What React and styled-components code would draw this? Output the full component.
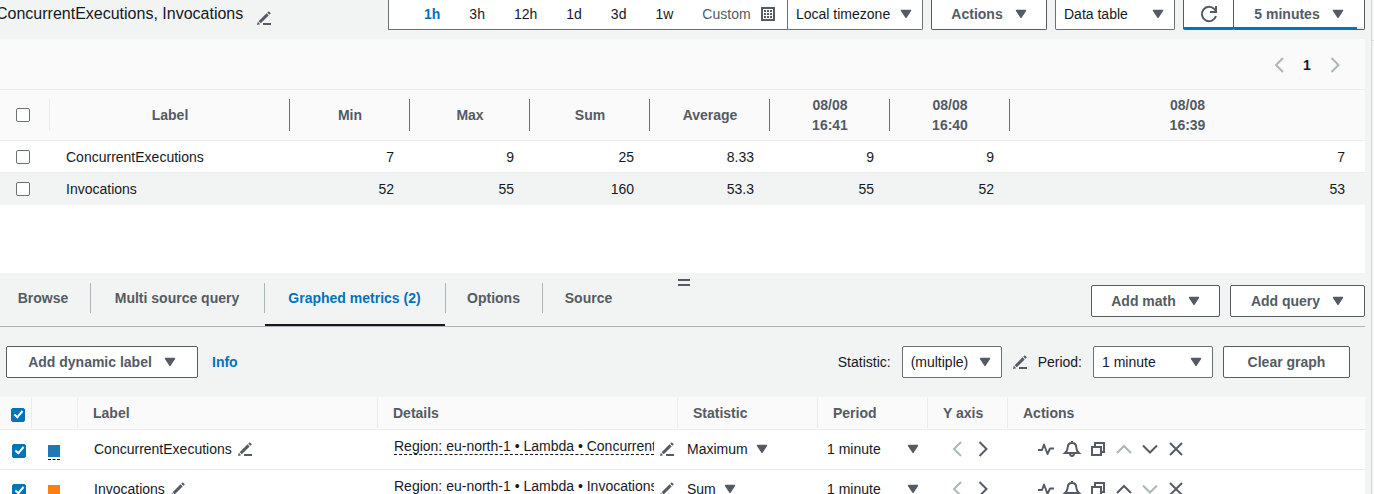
import React from "react";
import styled, { createGlobalStyle, css } from "styled-components";

const c = {
  text: "#16191f",
  muted: "#545b64",
  faint: "#aab7b8",
  border: "#687078",
  line: "#eaeded",
  link: "#0073bb",
  gray: "#f2f3f3",
  head: "#fafafa",
};

const Global = createGlobalStyle`
  *, *::before, *::after { box-sizing: border-box; }
  body {
    margin: 0;
    background: ${c.gray};
    color: ${c.text};
    font: 14px/20px "Liberation Sans", Arial, sans-serif;
  }
  button, select, input { font: inherit; color: inherit; margin: 0; }
  button { padding: 0; border: 0; background: none; cursor: pointer; }
`;

const Shell = styled.div`
  display: flex;
  height: 100vh;
  overflow: hidden;
`;

const Main = styled.main`
  flex: 1;
  min-width: 0;
  padding-right: 6px;
  border-right: 1px solid #d5dbdb;
`;

const SideRail = styled.aside`
  flex: 0 0 2px;
  padding-top: 40px;
  &::before {
    content: "";
    display: block;
    border-top: 1px solid #d5dbdb;
  }
`;

/* ---------- icons ---------- */

const Svg = styled.svg`
  display: block;
  flex: none;
  overflow: visible;
  fill: none;
  stroke: currentColor;
  stroke-width: 2;
`;

const Caret = () => (
  <Svg width="12" height="10" viewBox="0 0 12 10" aria-hidden="true">
    <path d="M1.5 1.5h9L6 8.4z" fill="currentColor" stroke="currentColor" strokeWidth="1.4" strokeLinejoin="round" />
  </Svg>
);

const Pencil = () => (
  <Svg width="14" height="14" viewBox="0 0 14 14" aria-hidden="true">
    <path d="M2.700 11.300L10.600 3.400" strokeWidth="3" />
    <path d="M11.300 2.700L12.800 1.200" strokeWidth="3" strokeLinejoin="round" />
    <path d="M0 14l.8-3.200 2.400 2.400z" fill="currentColor" stroke="none" />
    <path d="M6 13h8" />
  </Svg>
);

const Chevron = ({ dir }) => {
  const d = {
    left: "M12 1L5 8l7 7",
    right: "M4.500 1l7 7-7 7",
    up: "M1 12l7-7 7 7",
    down: "M1 4.500l7 7 7-7",
  }[dir];
  return (
    <Svg width="16" height="16" viewBox="0 0 16 16" aria-hidden="true">
      <path d={d} />
    </Svg>
  );
};

const Refresh = () => (
  <Svg width="16" height="16" viewBox="0 0 16 16" aria-hidden="true">
    <path d="M15 10A7.200 7.200 0 1 1 13.500 3.200L15 5" />
    <path d="M15 0v6H9" />
  </Svg>
);

const Calendar = () => (
  <Svg width="14" height="14" viewBox="0 0 14 14" aria-hidden="true">
    <path d="M1 1h12v12H1z" />
    <path d="M3 4h8M3 7h8M3 10h8" strokeDasharray="2 1" />
  </Svg>
);

const Pulse = () => (
  <Svg width="16" height="16" viewBox="0 0 16 16" aria-hidden="true">
    <path d="M0 9h4l2-5.500 3.500 9.500L12 7.500h4" strokeWidth="1.900" strokeLinejoin="round" />
  </Svg>
);

const Bell = () => (
  <Svg width="16" height="16" viewBox="0 0 16 16" aria-hidden="true">
    <path d="M8 0v2M1 12h14c-1.700-1.500-2.700-3-2.700-5.500S10.700 2 8 2 3.700 4 3.700 6.500 2.700 10.500 1 12z" />
    <path d="M6 12.500c0 3.300 4 3.300 4 0" />
  </Svg>
);

const Copy = () => (
  <Svg width="16" height="16" viewBox="0 0 16 16" aria-hidden="true">
    <path d="M2 6h9v8H2zM5 5V2h9v9h-2" />
  </Svg>
);

const Close = () => (
  <Svg width="16" height="16" viewBox="0 0 16 16" aria-hidden="true">
    <path d="M2 2l12 12M14 2L2 14" />
  </Svg>
);

/* ---------- controls ---------- */

const controlBox = css`
  height: 32px;
  background: #fff;
  border: 1px solid ${c.muted};
  border-radius: 2px;
  ${(p) =>
    p.$docked &&
    css`
      height: 30px;
      padding-bottom: 2px;
      border-top: 0;
      border-radius: 0 0 2px 2px;
    `}
`;

const Button = styled.button`
  ${controlBox}
  flex: none;
  display: flex;
  align-items: center;
  justify-content: center;
  gap: 12px;
  width: ${(p) => p.$w}px;
  color: ${c.muted};
  font-weight: 700;
`;

const SelectBox = styled.div`
  ${controlBox}
  flex: none;
  display: grid;
  align-items: center;
  width: ${(p) => p.$w}px;
  color: ${c.muted};
  border-color: ${c.border};
  ${(p) =>
    p.$plain &&
    css`
      height: 20px;
      border: 0;
      background: none;
      width: ${p.$w ? `${p.$w}px` : "max-content"};
    `}
  > * {
    grid-area: 1 / 1;
  }
  > svg {
    justify-self: end;
    margin-right: ${(p) => (p.$plain ? 0 : 10)}px;
    pointer-events: none;
  }
`;

const NativeSelect = styled.select`
  appearance: none;
  field-sizing: content;
  min-width: 100%;
  height: 100%;
  padding: 0 ${(p) => (p.$plain ? 20 : 22)}px 0 ${(p) => (p.$plain ? 0 : 8)}px;
  border: 0;
  background: none;
  color: ${c.text};
`;

const Select = ({ label, id, value, options = [], w, docked, plain }) => (
  <SelectBox $w={w} $docked={docked} $plain={plain}>
    <NativeSelect id={id} aria-label={label} defaultValue={value} $plain={plain}>
      {[value, ...options].map((o) => (
        <option key={o}>{o}</option>
      ))}
    </NativeSelect>
    <Caret />
  </SelectBox>
);

const Checkbox = styled.input.attrs({ type: "checkbox" })`
  appearance: none;
  display: block;
  width: 14px;
  height: 14px;
  border: 1px solid ${c.border};
  border-radius: 2px;
  background: #fff;
  &:checked {
    border-color: ${c.link};
    background: ${c.link};
  }
  &:checked::before {
    content: "";
    display: block;
    width: 5px;
    height: 9px;
    margin: 0 0 0 4px;
    border: solid #fff;
    border-width: 0 2px 2px 0;
    transform: rotate(40deg);
  }
`;

const IconButton = styled.button`
  display: flex;
  flex: none;
  color: ${(p) => (p.disabled ? c.faint : c.muted)};
`;

/* ---------- header ---------- */

const Header = styled.header`
  display: flex;
  align-items: flex-start;
  height: 39px;
`;

const TitleGroup = styled.div`
  display: flex;
  align-items: center;
  gap: 14px;
  flex: 1;
  min-width: 0;
  height: 28px;
  margin-left: -4px;
  svg {
    margin-top: 8px;
  }
`;

const Title = styled.h1`
  margin: 0;
  font-size: 16px;
  font-weight: 400;
  white-space: nowrap;
`;

const RangeBar = styled.div`
  display: flex;
  align-items: center;
  gap: 29px;
  flex: none;
  width: 400px;
  height: 30px;
  padding: 0 0 2px 35px;
  margin-right: -1px;
  border: 1px solid ${c.border};
  border-top: 0;
  background: #fff;
`;

const RangeButton = styled.button`
  display: flex;
  align-items: center;
  gap: 10px;
  color: ${(p) => (p.$active ? c.link : p.$soft ? c.muted : c.text)};
  font-weight: ${(p) => (p.$active ? 700 : 400)};
`;

const HeaderControls = styled.div`
  display: flex;
  gap: 8px;
`;

const RefreshGroup = styled.div`
  position: relative;
  display: flex;
  > button + button {
    margin-left: -1px;
  }
`;

const Progress = styled.div`
  position: absolute;
  left: 0;
  right: 1px;
  bottom: 1px;
  height: 2px;
  background: ${c.line};
  &::before {
    content: "";
    display: block;
    width: 96%;
    height: 2px;
    background: ${c.link};
  }
`;

/* ---------- data table ---------- */

const DataPanel = styled.section`
  min-height: 234px;
  background: #fff;
`;

const Pager = styled.nav`
  display: flex;
  align-items: center;
  justify-content: flex-end;
  gap: 16px;
  height: 51px;
  padding: 2px 22px 0 0;
  background: ${c.head};
  border-bottom: 1px solid ${c.line};
`;

const PageNumber = styled.button`
  width: 8px;
  font-weight: 700;
`;

const Table = styled.table`
  width: 100%;
  table-layout: fixed;
  border-collapse: separate;
  border-spacing: 0;
`;

const Col = styled.col`
  width: ${(p) => (p.$w ? `${p.$w}px` : "auto")};
`;

const Th = styled.th`
  position: relative;
  height: ${(p) => p.$h}px;
  padding: 0 16px;
  background: ${c.head};
  border-bottom: 1px solid ${c.line};
  color: ${c.muted};
  text-align: ${(p) => p.$align || "left"};
  &:not(:last-child)::after {
    content: "";
    position: absolute;
    right: 0;
    top: ${(p) => p.$inset}px;
    bottom: ${(p) => p.$inset}px;
    border-right: 1px solid ${(p) => (p.$strong ? c.border : c.line)};
  }
`;

const MetricTh = styled(Th)`
  padding: 0 15px;
`;

const SelectHead = styled(Th)`
  padding: 3px 0 0 11px;
`;

const DataRow = styled.tr`
  background: ${(p) => (p.$shaded ? c.gray : "#fff")};
`;

const DataCell = styled.td`
  height: 32px;
  padding: 0 16px;
  border-bottom: 1px solid ${c.line};
  text-align: ${(p) => p.$align || "right"};
  &:last-child {
    padding-right: 20px;
  }
  tr:last-child > & {
    border-bottom-color: ${c.gray};
  }
`;

/* ---------- lower panel ---------- */

const Lower = styled.section`
  position: relative;
`;

const Handle = styled.div`
  position: absolute;
  top: 6px;
  left: 50%;
  width: 12px;
  height: 7px;
  margin-left: -5px;
  border: solid ${c.muted};
  border-width: 2px 0;
`;

const TabBar = styled.div`
  display: flex;
  justify-content: space-between;
  align-items: flex-end;
  height: 54px;
  border-bottom: 1px solid ${c.faint};
`;

const Tabs = styled.div`
  display: flex;
  margin-left: -3px;
`;

const Tab = styled.button`
  display: flex;
  justify-content: center;
  align-items: flex-start;
  width: ${(p) => p.$w}px;
  height: 43px;
  padding-right: 1px;
  border-bottom: 2px solid ${(p) => (p.$active ? c.text : "transparent")};
  color: ${(p) => (p.$active ? c.link : c.muted)};
  font-weight: 700;
  line-height: 30px;
`;

const TabDivider = styled.span`
  width: 1px;
  height: 30px;
  background: ${c.faint};
`;

const ButtonRow = styled.div`
  display: flex;
  gap: 10px;
  padding-bottom: 9px;
`;

const Toolbar = styled.div`
  display: flex;
  align-items: center;
  justify-content: space-between;
  height: 70px;
  padding: 0 15px 0 6px;
`;

const ToolGroup = styled.div`
  display: flex;
  align-items: center;
  gap: ${(p) => p.$gap || 10}px;
`;

const InfoLink = styled.a`
  margin-left: 4px;
  color: ${c.link};
  font-weight: 700;
  text-decoration: none;
`;

const MetricRow = styled.tr`
  background: #fff;
`;

const MetricCell = styled.td`
  height: 40px;
  padding: 0 0 2px ${(p) => p.$pad}px;
  border-bottom: 1px solid ${c.line};
`;

const MarkCell = styled(MetricCell)`
  padding-top: 2px;
  padding-bottom: 0;
`;

const Inline = styled.div`
  display: flex;
  align-items: center;
  gap: ${(p) => p.$gap || 6}px;
`;

const Swatch = styled.button`
  display: block;
  width: 12px;
  height: 15px;
  margin-top: 3px;
  border-bottom: 1px dashed ${c.text};
  &::before {
    content: "";
    display: block;
    height: 12px;
    margin-bottom: 2px;
    background: ${(p) => p.$color};
  }
`;

const Details = styled.span`
  width: 260px;
  margin-bottom: 5px;
  overflow: hidden;
  border-bottom: 1px dashed ${c.text};
  line-height: 16px;
  white-space: nowrap;
`;

const ranges = ["1h", "3h", "12h", "1d", "3d", "1w"];
const heads = ["Min", "Max", "Sum", "Average", "08/08 16:41", "08/08 16:40", "08/08 16:39"];
const rows = [
  { label: "ConcurrentExecutions", values: ["7", "9", "25", "8.33", "9", "9", "7"] },
  { label: "Invocations", values: ["52", "55", "160", "53.3", "55", "52", "53"] },
];
const tabs = [
  { name: "Browse", w: 93 },
  { name: "Multi source query", w: 173 },
  { name: "Graphed metrics (2)", w: 180, active: true },
  { name: "Options", w: 96 },
  { name: "Source", w: 92 },
];
const metrics = [
  { label: "ConcurrentExecutions", stat: "Maximum", other: "Sum", color: "#1f77b4", first: true },
  { label: "Invocations", stat: "Sum", other: "Maximum", color: "#ff7f0e", first: false },
];

const HeadText = ({ text }) =>
  text.split(" ").map((part, i) => (
    <React.Fragment key={part}>
      {i > 0 && <br />}
      {part}
    </React.Fragment>
  ));

export default function App() {
  return (
    <>
      <Global />
      <Shell>
        <Main>
          <Header>
            <TitleGroup>
              <Title>ConcurrentExecutions, Invocations</Title>
              <IconButton aria-label="Edit title"><Pencil /></IconButton>
            </TitleGroup>
            <RangeBar>
              {ranges.map((r) => (
                <RangeButton key={r} $active={r === "1h"}>{r}</RangeButton>
              ))}
              <RangeButton $soft>Custom <Calendar /></RangeButton>
            </RangeBar>
            <HeaderControls>
              <Select docked w={136} label="Timezone" value="Local timezone" options={["UTC"]} />
              <Button $docked $w={116}>Actions <Caret /></Button>
              <Select docked w={120} label="Graph type" value="Data table" options={["Line"]} />
              <RefreshGroup>
                <Button $docked $w={51} aria-label="Refresh"><Refresh /></Button>
                <Button $docked $w={132}>5 minutes <Caret /></Button>
                <Progress />
              </RefreshGroup>
            </HeaderControls>
          </Header>

          <DataPanel>
            <Pager aria-label="Pages">
              <IconButton disabled aria-label="Previous page"><Chevron dir="left" /></IconButton>
              <PageNumber>1</PageNumber>
              <IconButton disabled aria-label="Next page"><Chevron dir="right" /></IconButton>
            </Pager>
            <Table>
              <colgroup>
                <Col $w={50} />
                <Col $w={240} />
                {heads.slice(1).map((h) => <Col key={h} $w={120} />)}
                <Col />
              </colgroup>
              <thead>
                <tr>
                  <Th $h={51} $inset={9}><Checkbox aria-label="Select all rows" /></Th>
                  <Th $h={51} $inset={9} $align="center" $strong>Label</Th>
                  {heads.map((h) => (
                    <Th key={h} $h={51} $inset={9} $align="center" $strong><HeadText text={h} /></Th>
                  ))}
                </tr>
              </thead>
              <tbody>
                {rows.map((r, i) => (
                  <DataRow key={r.label} $shaded={i === 1}>
                    <DataCell><Checkbox aria-label={`Select ${r.label}`} /></DataCell>
                    <DataCell $align="left">{r.label}</DataCell>
                    {r.values.map((v, j) => (
                      <DataCell key={heads[j]}>{v}</DataCell>
                    ))}
                  </DataRow>
                ))}
              </tbody>
            </Table>
          </DataPanel>

          <Lower>
            <Handle role="separator" aria-label="Resize panels" />
            <TabBar>
              <Tabs role="tablist">
                {tabs.map((t, i) => (
                  <React.Fragment key={t.name}>
                    {i > 0 && <TabDivider />}
                    <Tab role="tab" aria-selected={!!t.active} $active={t.active} $w={t.w}>{t.name}</Tab>
                  </React.Fragment>
                ))}
              </Tabs>
              <ButtonRow>
                <Button $w={129}>Add math <Caret /></Button>
                <Button $w={135}>Add query <Caret /></Button>
              </ButtonRow>
            </TabBar>
            <Toolbar>
              <ToolGroup>
                <Button $w={192}>Add dynamic label <Caret /></Button>
                <InfoLink href="#info">Info</InfoLink>
              </ToolGroup>
              <ToolGroup>
                <ToolGroup $gap={11}>
                  <label htmlFor="statistic">Statistic:</label>
                  <Select id="statistic" w={100} value="(multiple)" />
                  <IconButton aria-label="Edit statistic"><Pencil /></IconButton>
                  <label htmlFor="period">Period:</label>
                  <Select id="period" w={120} value="1 minute" options={["5 minutes"]} />
                </ToolGroup>
                <Button $w={127}>Clear graph</Button>
              </ToolGroup>
            </Toolbar>
            <Table>
              <colgroup>
                {[32, 46, 300, 300, 140, 110, 80].map((w, i) => <Col key={i} $w={w} />)}
                <Col />
              </colgroup>
              <thead>
                <tr>
                  <SelectHead $h={33} $inset={1}>
                    <Checkbox defaultChecked aria-label="Show all metrics" />
                  </SelectHead>
                  {["", "Label", "Details", "Statistic", "Period", "Y axis", "Actions"].map((h) => (
                    <MetricTh key={h} $h={33} $inset={1}>{h}</MetricTh>
                  ))}
                </tr>
              </thead>
              <tbody>
                {metrics.map((m) => (
                  <MetricRow key={m.label}>
                    <MarkCell $pad={12}><Checkbox defaultChecked aria-label={`Show ${m.label}`} /></MarkCell>
                    <MarkCell $pad={16}><Swatch $color={m.color} aria-label={`Color of ${m.label}`} /></MarkCell>
                    <MetricCell $pad={16}>
                      <Inline>{m.label}<IconButton aria-label="Edit label"><Pencil /></IconButton></Inline>
                    </MetricCell>
                    <MetricCell $pad={16}>
                      <Inline>
                        <Details>Region: eu-north-1 • Lambda • {m.label}</Details>
                        <IconButton aria-label="Edit details"><Pencil /></IconButton>
                      </Inline>
                    </MetricCell>
                    <MetricCell $pad={9}>
                      <Select plain label="Statistic" value={m.stat} options={[m.other]} />
                    </MetricCell>
                    <MetricCell $pad={9}>
                      <Select plain w={92} label="Period" value="1 minute" options={["5 minutes"]} />
                    </MetricCell>
                    <MetricCell $pad={21}>
                      <Inline $gap={10}>
                        <IconButton disabled aria-label="Left axis"><Chevron dir="left" /></IconButton>
                        <IconButton aria-label="Right axis"><Chevron dir="right" /></IconButton>
                      </Inline>
                    </MetricCell>
                    <MetricCell $pad={30}>
                      <Inline $gap={10}>
                        <IconButton aria-label="Anomaly detection"><Pulse /></IconButton>
                        <IconButton aria-label="Create alarm"><Bell /></IconButton>
                        <IconButton aria-label="Duplicate"><Copy /></IconButton>
                        <IconButton disabled={m.first} aria-label="Move up"><Chevron dir="up" /></IconButton>
                        <IconButton disabled={!m.first} aria-label="Move down"><Chevron dir="down" /></IconButton>
                        <IconButton aria-label="Remove"><Close /></IconButton>
                      </Inline>
                    </MetricCell>
                  </MetricRow>
                ))}
              </tbody>
            </Table>
          </Lower>
        </Main>
        <SideRail />
      </Shell>
    </>
  );
}
